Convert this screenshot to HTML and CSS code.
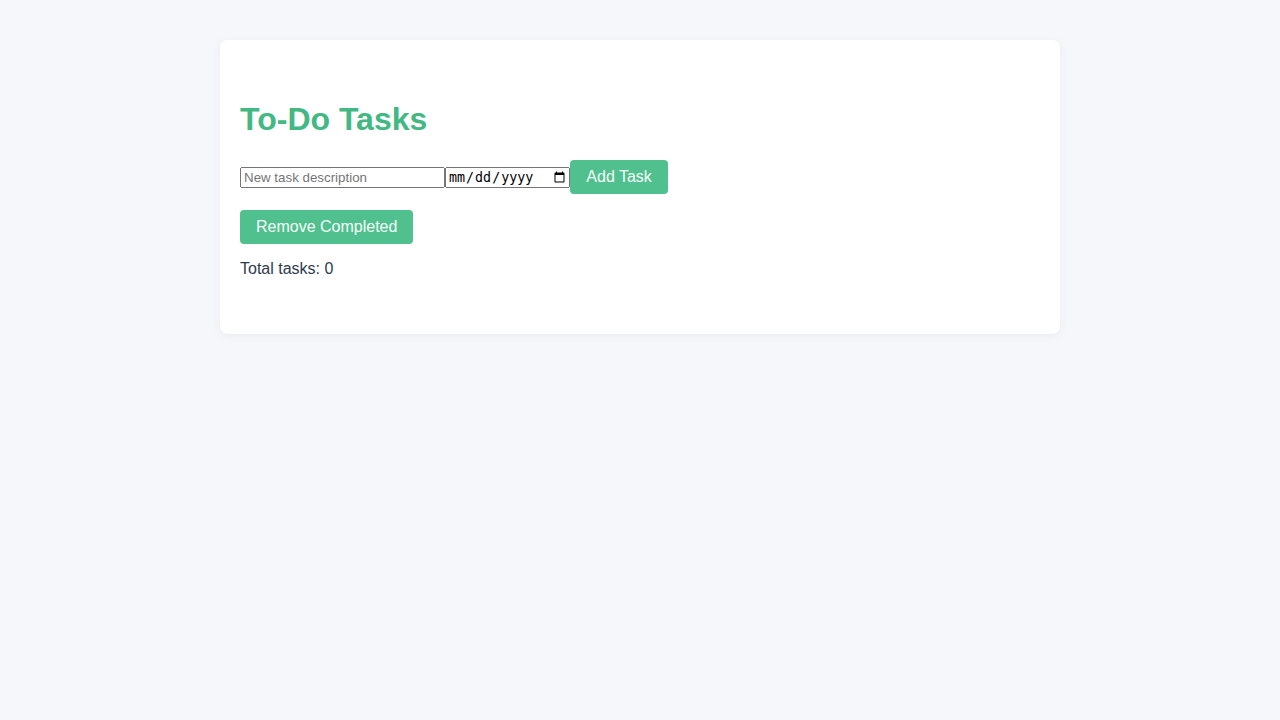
FILE: index.html
```html
<!DOCTYPE html>
<html lang="en">
<head>
<meta charset="utf-8">
<title>To-Do Tasks</title>
<link rel="stylesheet" href="styles.css">
</head>
<body>
<main class="card">
  <h1 class="title">To-Do Tasks</h1>
  <form class="task-form">
    <input class="task-input" type="text" placeholder="New task description" aria-label="New task description"><input class="date-input" type="date" aria-label="Due date"><button class="button" type="button">Add Task</button>
  </form>
  <button class="button" type="button">Remove Completed</button>
  <p class="total">Total tasks: 0</p>
</main>
</body>
</html>
```

FILE: styles.css
```css
body {
  margin: 0;
  background: #f5f7fb;
  color: #2d3a4f;
  font-family: "Liberation Sans", Arial, sans-serif;
  font-size: 16px;
}

.card {
  box-sizing: border-box;
  max-width: 840px;
  margin: 40px auto;
  padding: 40px 20px;
  background: #fff;
  border-radius: 8px;
  box-shadow: 0 2px 10px rgba(0, 0, 0, 0.05);
}

.title {
  margin: 21px 0 22px;
  color: #42b883;
  font-size: 32px;
}

.task-form {
  margin-bottom: 16px;
}

.task-input {
  width: 197px;
}

.button {
  padding: 8px 16px;
  border: 0;
  border-radius: 4px;
  background: #50c08e;
  color: #f5fffa;
  font-family: inherit;
  font-size: 16px;
  cursor: pointer;
}

.total {
  margin: 16px 0;
}
```
